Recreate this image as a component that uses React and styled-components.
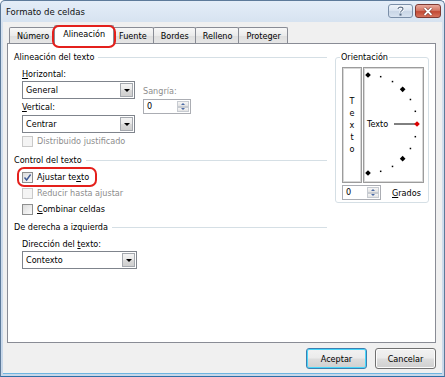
import React from 'react'
import styled, { createGlobalStyle, css } from 'styled-components'

const GlobalStyle = createGlobalStyle`
  html, body {
    margin: 0;
    padding: 0;
    background: #fff;
  }
  body {
    font-family: "DejaVu Sans Condensed", "DejaVu Sans", sans-serif;
    font-stretch: condensed;
    font-size: 9px;
    line-height: 12px;
    color: #000;
  }
`

const Window = styled.div`
  width: 445px;
  height: 377px;
  box-sizing: border-box;
  display: flex;
  flex-direction: column;
  background: linear-gradient(#e4edf8, #d6e2f0 22px, #c8d8ea);
  border: 1px solid #5d7a9a;
  border-bottom-color: #2d6fa6;
  border-radius: 5px 5px 0 0;
  overflow: hidden;
`

const TitleBar = styled.div`
  height: 21px;
  box-sizing: border-box;
  display: flex;
  align-items: flex-start;
  padding: 3px 3px 0 5px;
`

const Title = styled.div`
  flex: 1;
  padding-top: 1px;
  line-height: 14px;
  font-size: 9.5px;
  color: #111;
`

const CaptionButton = styled.div`
  height: 14px;
  box-sizing: border-box;
  border-radius: 3px;
  display: flex;
  align-items: center;
  justify-content: center;
  ${p =>
    p.$close
      ? css`
          width: 26px;
          margin-left: 2px;
          border: 1px solid #7e3a33;
          background: linear-gradient(#e8a99c, #d47866 45%, #c24a35 55%, #d6735d);
          color: #fff;
        `
      : css`
          width: 25px;
          border: 1px solid #7b8fa8;
          background: linear-gradient(#eef3f9, #dbe5f1 45%, #c9d6e6 55%, #d8e3f0);
          color: #5b6e86;
        `}
`

const Body = styled.div`
  flex: 1;
  margin: 0 2px 2px;
  background: #f0f0f0;
  padding: 3px 6px 0 4px;
  display: flex;
  flex-direction: column;
  border-bottom: 1px solid #6fb5e0;
`

const TabRow = styled.div`
  height: 18px;
  display: flex;
  align-items: flex-end;
  padding-left: 2px;
  position: relative;
  z-index: 1;
`

const Tab = styled.div`
  position: relative;
  box-sizing: border-box;
  border: 1px solid #898c95;
  border-bottom: none;
  border-radius: 2px 2px 0 0;
  display: flex;
  align-items: center;
  white-space: nowrap;
  ${p =>
    p.$active
      ? css`
          height: 19px;
          margin: 0 -2px -1px;
          padding: 0 8px 2px;
          background: #fff;
          z-index: 2;
        `
      : css`
          height: 16px;
          margin-left: -1px;
          padding: 0 6px 0 7px;
          background: linear-gradient(#f7f7f7, #ebebeb 50%, #dedede 51%, #e6e6e6);
          &:first-child {
            margin-left: 0;
          }
        `}
`

const Ring = styled.div`
  position: absolute;
  border: 2px solid #e4201c;
  border-radius: 7px;
  pointer-events: none;
  z-index: 5;
`

const TabRing = styled(Ring)`
  top: -1px;
  left: -3px;
  right: -3px;
  bottom: -4px;
`

const Panel = styled.div`
  height: 300px;
  box-sizing: border-box;
  background: #fff;
  border: 1px solid #898c95;
  display: flex;
  gap: 8px;
  padding: 7px 6px 0;
`

const LeftColumn = styled.div`
  width: 313px;
  display: flex;
  flex-direction: column;
`

const SectionTitle = styled.div`
  display: flex;
  align-items: center;
  gap: 4px;
  height: 12px;
  margin-top: ${p => p.$top || 0}px;
  white-space: nowrap;

  &::after {
    content: '';
    flex: 1;
    height: 1px;
    background: #d5dfe5;
  }
`

const Indent = styled.div`
  padding-left: 8px;
  display: flex;
  flex-direction: column;
`

const FieldLabel = styled.div`
  height: 12px;
  margin-top: ${p => p.$top || 0}px;
  white-space: nowrap;
  color: ${p => (p.$disabled ? '#8d8d8d' : '#000')};
`

const AlignRow = styled.div`
  display: flex;
  gap: 8px;
  margin-top: 5px;
`

const Column = styled.div`
  display: flex;
  flex-direction: column;
  width: ${p => (p.$width ? `${p.$width}px` : 'auto')};
  padding-top: ${p => p.$pad || 0}px;
`

const SelectBox = styled.div`
  width: ${p => p.$width}px;
  height: 18px;
  box-sizing: border-box;
  margin-top: ${p => p.$top || 0}px;
  border: 1px solid #7f848c;
  background: #fff;
  display: flex;
  align-items: center;
  padding: 1px 1px 1px 3px;
`

const SelectValue = styled.span`
  flex: 1;
`

const DropButton = styled.div`
  width: 13px;
  height: 100%;
  box-sizing: border-box;
  border: 1px solid #a4a8ae;
  background: linear-gradient(#f4f4f4, #e8e8e8 50%, #d9d9d9 51%, #cfcfcf);
  display: flex;
  align-items: center;
  justify-content: center;

  &::after {
    content: '';
    border-left: 3px solid transparent;
    border-right: 3px solid transparent;
    border-top: 3px solid #000;
    margin-top: 1px;
  }
`

const SpinBox = styled.div`
  width: ${p => p.$width}px;
  height: 15px;
  box-sizing: border-box;
  margin-top: ${p => p.$top || 0}px;
  border: 1px solid #abadb3;
  background: #fff;
  display: flex;
  align-items: stretch;
  padding: 1px 1px 1px 3px;
`

const SpinValue = styled.span`
  flex: 1;
  line-height: 11px;
`

const SpinButtons = styled.div`
  width: 12px;
  display: flex;
  flex-direction: column;
`

const SpinArrow = styled.div`
  flex: 1;
  border: 1px solid #c7cbd1;
  background: linear-gradient(#f6f6f6, #e2e2e2);
  display: flex;
  align-items: center;
  justify-content: center;

  &::after {
    content: '';
    border-left: 2px solid transparent;
    border-right: 2px solid transparent;
    ${p =>
      p.$down
        ? css`border-top: 2px solid #4b6aa5;`
        : css`border-bottom: 2px solid #4b6aa5;`}
  }
`

const CheckRow = styled.label`
  position: relative;
  display: flex;
  align-items: center;
  gap: 4px;
  height: 12px;
  margin-top: ${p => p.$top || 0}px;
  white-space: nowrap;
  color: ${p => (p.$disabled ? '#8d8d8d' : '#000')};
`

const CheckBox = styled.span`
  width: 11px;
  height: 11px;
  box-sizing: border-box;
  display: flex;
  align-items: center;
  justify-content: center;
  ${p =>
    p.$disabled
      ? css`
          border: 1px solid #c9c9c9;
          background: #f4f4f4;
        `
      : css`
          border: 1px solid #8e8f8f;
          background: linear-gradient(135deg, #dcdcdc, #fbfbfb);
        `}
`

const CheckRing = styled(Ring)`
  left: -5px;
  top: -4px;
  width: 80px;
  height: 20px;
  box-sizing: border-box;
`

const Orientation = styled.fieldset`
  width: 94px;
  min-width: 0;
  height: 152px;
  box-sizing: border-box;
  margin: 0;
  padding: 0 4px 4px 6px;
  border: 1px solid #d5dfe5;
  border-radius: 3px;
  align-self: flex-start;
`

const Legend = styled.legend`
  padding: 0 1px;
  margin-left: -2px;
  line-height: 12px;
`

const DialRow = styled.div`
  display: flex;
  gap: 1px;
  margin-top: 4px;
`

const DialFrame = styled.div`
  width: ${p => p.$width}px;
  height: 116px;
  box-sizing: border-box;
  border: 1px solid #9c9c9c;
  box-shadow: inset 0 0 0 1px #d8d8d8;
  background: #fff;
`

const StackedText = styled(DialFrame)`
  display: flex;
  flex-direction: column;
  align-items: center;
  justify-content: center;
  line-height: 12px;
`

const DegreeRow = styled.div`
  display: flex;
  align-items: center;
  gap: 11px;
  margin-top: 2px;
`

const Footer = styled.div`
  display: flex;
  justify-content: flex-end;
  gap: 8px;
  padding-top: 5px;
`

const Button = styled.div`
  width: 61px;
  height: 21px;
  box-sizing: border-box;
  border-radius: 3px;
  display: flex;
  align-items: center;
  justify-content: center;
  background: linear-gradient(#f2f2f2, #ebebeb 48%, #dddddd 52%, #cfcfcf);
  border: 1px solid ${p => (p.$default ? '#3c7fb1' : '#707070')};
  box-shadow: inset 0 0 0 1px ${p => (p.$default ? '#48d7fb' : '#fcfcfc')};
`

const tabs = ['Número', 'Alineación', 'Fuente', 'Bordes', 'Relleno', 'Proteger']

const Select = ({ width, top, value }) => (
  <SelectBox $width={width} $top={top}>
    <SelectValue>{value}</SelectValue>
    <DropButton />
  </SelectBox>
)

const Spin = ({ width, top, value }) => (
  <SpinBox $width={width} $top={top}>
    <SpinValue>{value}</SpinValue>
    <SpinButtons>
      <SpinArrow />
      <SpinArrow $down />
    </SpinButtons>
  </SpinBox>
)

const Check = ({ checked, disabled, top, ring, children }) => (
  <CheckRow $top={top} $disabled={disabled}>
    <CheckBox $disabled={disabled}>
      {checked && (
        <svg width='9' height='9' viewBox='0 0 9 9'>
          <path d='M1.5 4.5 L3.6 7 L7.6 1.5' fill='none' stroke='#3f5a95' strokeWidth='1.4' />
        </svg>
      )}
    </CheckBox>
    <span>{children}</span>
    {ring && <CheckRing />}
  </CheckRow>
)

const Dial = () => {
  const cx = 4
  const cy = 56
  const r = 49
  const marks = [-90, -75, -60, -45, -30, -15, 15, 30, 45, 60, 75, 90]
  return (
    <svg width='59' height='114' viewBox='0 0 59 114'>
      {marks.map(a => {
        const rad = (a * Math.PI) / 180
        const x = cx + r * Math.cos(rad)
        const y = cy + r * Math.sin(rad)
        const big = Math.abs(a) === 90 || Math.abs(a) === 45
        return big ? (
          <rect key={a} x={x - 2} y={y - 2} width='4' height='4' fill='#000' transform={`rotate(45 ${x} ${y})`} />
        ) : (
          <rect key={a} x={x - 0.75} y={y - 0.75} width='1.5' height='1.5' fill='#000' />
        )
      })}
      <text x='3' y='59' fontFamily='"DejaVu Sans Condensed", "DejaVu Sans", sans-serif' fontSize='9' fontStretch='condensed'>
        Texto
      </text>
      <line x1='30' y1='56' x2='51' y2='56' stroke='#000' strokeWidth='1' />
      <rect x={cx + r - 2} y={cy - 2} width='4' height='4' fill='#d00' transform={`rotate(45 ${cx + r} ${cy})`} />
    </svg>
  )
}

const App = () => (
  <>
    <GlobalStyle />
    <Window>
      <TitleBar>
        <Title>Formato de celdas</Title>
        <CaptionButton>
          <svg width='9' height='10' viewBox='0 0 9 10'>
            <path d='M2 3 C2 0.5 7 0.5 7 3 C7 4.6 4.5 4.8 4.5 6.6' fill='none' stroke='#fff' strokeWidth='2.6' />
            <path d='M2 3 C2 0.5 7 0.5 7 3 C7 4.6 4.5 4.8 4.5 6.6' fill='none' stroke='#5b6e86' strokeWidth='1.1' />
            <rect x='3.5' y='7.6' width='2' height='2' fill='#5b6e86' />
          </svg>
        </CaptionButton>
        <CaptionButton $close>
          <svg width='10' height='9' viewBox='0 0 10 9'>
            <path d='M1.5 1 L8.5 8 M8.5 1 L1.5 8' stroke='#6b2a22' strokeWidth='3' />
            <path d='M1.5 1 L8.5 8 M8.5 1 L1.5 8' stroke='#fff' strokeWidth='1.8' />
          </svg>
        </CaptionButton>
      </TitleBar>
      <Body>
        <TabRow>
          {tabs.map(t => (
            <Tab key={t} $active={t === 'Alineación'}>
              {t}
              {t === 'Alineación' && <TabRing />}
            </Tab>
          ))}
        </TabRow>
        <Panel>
          <LeftColumn>
            <SectionTitle>Alineación del texto</SectionTitle>
            <Indent>
              <AlignRow>
                <Column $width={113}>
                  <FieldLabel>
                    <u>H</u>orizontal:
                  </FieldLabel>
                  <Select width={113} top={1} value='General' />
                  <FieldLabel $top={2}>
                    <u>V</u>ertical:
                  </FieldLabel>
                  <Select width={113} top={2} value='Centrar' />
                </Column>
                <Column $pad={17}>
                  <FieldLabel $disabled>Sangría:</FieldLabel>
                  <Spin width={48} top={2} value='0' />
                </Column>
              </AlignRow>
              <Check disabled top={2}>
                Distribuido <u>j</u>ustificado
              </Check>
            </Indent>
            <SectionTitle $top={7}>Control del texto</SectionTitle>
            <Indent>
              <Check checked ring top={5}>
                Ajustar te<u>x</u>to
              </Check>
              <Check disabled top={4}>
                Reducir hasta ajustar
              </Check>
              <Check top={4}>
                <u>C</u>ombinar celdas
              </Check>
            </Indent>
            <SectionTitle $top={6}>De derecha a izquierda</SectionTitle>
            <Indent>
              <FieldLabel $top={5}>
                Dirección del <u>t</u>exto:
              </FieldLabel>
              <Select width={115} top={1} value='Contexto' />
            </Indent>
          </LeftColumn>
          <Orientation>
            <Legend>Orientación</Legend>
            <DialRow>
              <StackedText $width={20}>
                <span>T</span>
                <span>e</span>
                <span>x</span>
                <span>t</span>
                <span>o</span>
              </StackedText>
              <DialFrame $width={61}>
                <Dial />
              </DialFrame>
            </DialRow>
            <DegreeRow>
              <Spin width={39} value='0' />
              <span>
                <u>G</u>rados
              </span>
            </DegreeRow>
          </Orientation>
        </Panel>
        <Footer>
          <Button $default>Aceptar</Button>
          <Button>Cancelar</Button>
        </Footer>
      </Body>
    </Window>
  </>
)

export default App
